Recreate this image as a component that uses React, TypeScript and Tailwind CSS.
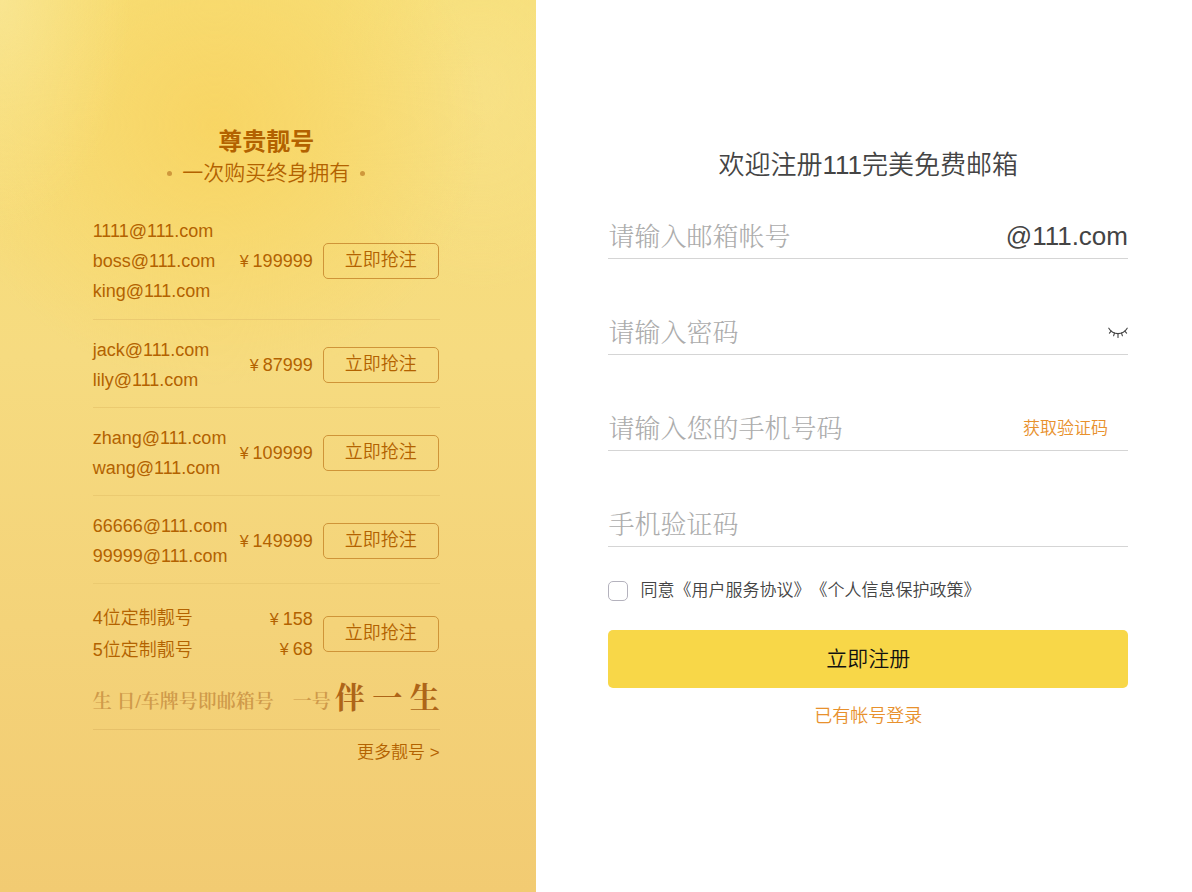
import { ReactNode, useState } from 'react';

interface Offer {
    addresses: string[];
    price: string;
}

const offers: Offer[] = [
    { addresses: ['1111@111.com', 'boss@111.com', 'king@111.com'], price: '¥199999' },
    { addresses: ['jack@111.com', 'lily@111.com'], price: '¥87999' },
    { addresses: ['zhang@111.com', 'wang@111.com'], price: '¥109999' },
    { addresses: ['66666@111.com', '99999@111.com'], price: '¥149999' }
];

const customOffers = [
    { name: '4位定制靓号', price: '¥158' },
    { name: '5位定制靓号', price: '¥68' }
];

function Price({ value }: { value: string }) {
    return (
        <span className="block text-right leading-[30px]">
            <span className="mr-1 text-base">{value[0]}</span>
            {value.slice(1)}
        </span>
    );
}

function BuyButton() {
    return (
        <button
            type="button"
            className="mr-px h-9 w-[116px] shrink-0 rounded-[5px] border border-[#cf9438] pb-0.5 text-lg leading-none"
        >
            立即抢注
        </button>
    );
}

function ClosedEyeIcon() {
    return (
        <svg
            className="h-3 w-5"
            viewBox="0 0 20 12"
            fill="none"
            stroke="#444"
            strokeWidth={1.1}
            strokeLinecap="round"
        >
            <path d="M.8 1.2C3 4.9 6 6.6 10 6.6S17 4.9 19.2 1.2" />
            <path d="M3.2 4.2 1.4 6.2M6.5 6 5.6 8.8M10 6.8v3.6M13.5 6l.9 2.8M16.8 4.2l1.8 2" />
        </svg>
    );
}

interface FieldProps {
    id: string;
    label: string;
    type?: string;
    children?: ReactNode;
}

function Field({ id, label, type = 'text', children }: FieldProps) {
    return (
        <div className="flex h-11 items-center border-b border-[#d5d5d5]">
            <input
                id={id}
                type={type}
                aria-label={label}
                placeholder={label}
                className="h-full min-w-0 flex-1 bg-transparent pt-0.5 font-['Liberation_Serif','Noto_Serif_CJK_SC','Noto_Sans_CJK_SC',serif] text-[26px] text-[#444] outline-none placeholder:text-[#acacac]"
            />
            {children}
        </div>
    );
}

function PremiumPanel() {
    return (
        <section className="flex w-[45%] shrink-0 flex-col items-center justify-center bg-[radial-gradient(ellipse_130px_230px_at_0_0,#f9e799bb_0,#f9e79955_50%,#f9e79900_100%),radial-gradient(ellipse_270px_260px_at_215px_125px,#f8d564_0,#f8d66699_45%,#f8d76600_100%),radial-gradient(ellipse_170px_200px_at_480px_90px,#f8e38f88_0,#f8e38f00_100%),linear-gradient(#f7df78_0,#f6db80_40%,#f2cb72_100%)] pr-1 text-lg font-[350] text-[#b36200]">
            <div className="w-[347px]">
                <h2 className="text-center text-2xl leading-[33px] font-bold">尊贵靓号</h2>
                <p className="flex h-8 items-center justify-center gap-2.5 text-[21px]">
                    <span className="size-[5px] rounded-full bg-[#cf983c]" />
                    一次购买终身拥有
                    <span className="size-[5px] rounded-full bg-[#cf983c]" />
                </p>

                <ul className="mt-[11px]">
                    {offers.map((offer) => (
                        <li
                            key={offer.price}
                            className="flex items-center border-b border-[#ebca70] pt-[15px] pb-3 first:pb-[13px]"
                        >
                            <div className="flex-1 leading-[30px]">
                                {offer.addresses.map((address) => (
                                    <p key={address}>{address}</p>
                                ))}
                            </div>
                            <div className="mr-2.5">
                                <Price value={offer.price} />
                            </div>
                            <BuyButton />
                        </li>
                    ))}
                    <li className="border-b border-[#e6c069] pt-[18px] pb-[13px]">
                        <div className="flex items-center">
                            <div className="flex-1 leading-8">
                                {customOffers.map((offer) => (
                                    <p key={offer.name}>{offer.name}</p>
                                ))}
                            </div>
                            <div className="mr-2.5">
                                {customOffers.map((offer) => (
                                    <Price key={offer.name} value={offer.price} />
                                ))}
                            </div>
                            <BuyButton />
                        </div>
                        <p className="mt-3.5 flex h-9 items-center justify-between font-['Liberation_Serif','Noto_Serif_CJK_SC','Noto_Sans_CJK_SC',serif] text-[19px] font-semibold whitespace-nowrap text-[#cf9a4a]">
                            <span className="pt-2">生 日/车牌号即邮箱号</span>
                            <span className="flex items-center gap-1">
                                <span className="pt-2">一号</span>
                                <strong className="text-3xl font-bold text-[#ae6518]">伴 一 生</strong>
                            </span>
                        </p>
                    </li>
                </ul>

                <div className="mt-2 text-right text-[17px] leading-[30px]">
                    <a href="#more">更多靓号 &gt;</a>
                </div>
            </div>
        </section>
    );
}

function RegisterForm() {
    const [agreed, setAgreed] = useState(false);

    return (
        <main className="flex flex-1 flex-col justify-center pr-16 pb-4 pl-[72px] font-[350] text-[#444]">
            <form className="w-full" onSubmit={(e) => e.preventDefault()}>
                <h1 className="text-center text-[26px] leading-10">欢迎注册111完美免费邮箱</h1>

                <div className="mt-[30px] flex flex-col gap-[52px]">
                    <Field id="account" label="请输入邮箱帐号">
                        <span className="text-[26px]">@111.com</span>
                    </Field>
                    <Field id="password" label="请输入密码" type="password">
                        <button type="button" aria-label="显示密码">
                            <ClosedEyeIcon />
                        </button>
                    </Field>
                    <Field id="phone" label="请输入您的手机号码">
                        <button type="button" className="mr-5 text-[17px] text-[#e8912d]">
                            获取验证码
                        </button>
                    </Field>
                    <Field id="code" label="手机验证码" />
                </div>

                <div className="mt-[34px] flex h-5 items-center gap-3 text-[17px]">
                    <input
                        id="agree"
                        type="checkbox"
                        checked={agreed}
                        onChange={(e) => setAgreed(e.target.checked)}
                        className="size-5 appearance-none rounded-[5px] border border-[#b4b2bd] checked:bg-[#f8d748]"
                    />
                    <label htmlFor="agree" className="whitespace-nowrap [text-spacing-trim:space-all]">
                        同意<a href="#terms">《用户服务协议》</a>
                        <a href="#privacy">《个人信息保护政策》</a>
                    </label>
                </div>

                <button
                    type="submit"
                    className="mt-[29px] h-[58px] w-full rounded-[5px] bg-[#f8d748] text-[21px] text-[#111]"
                >
                    立即注册
                </button>
                <div className="mt-[13px] text-center text-lg leading-[30px] text-[#e8912d]">
                    <a href="#login">已有帐号登录</a>
                </div>
            </form>
        </main>
    );
}

export default function App() {
    return (
        <div
            lang="zh-CN"
            className="flex min-h-screen bg-white font-['Liberation_Sans','Noto_Sans_CJK_SC',sans-serif]"
        >
            <PremiumPanel />
            <RegisterForm />
        </div>
    );
}
